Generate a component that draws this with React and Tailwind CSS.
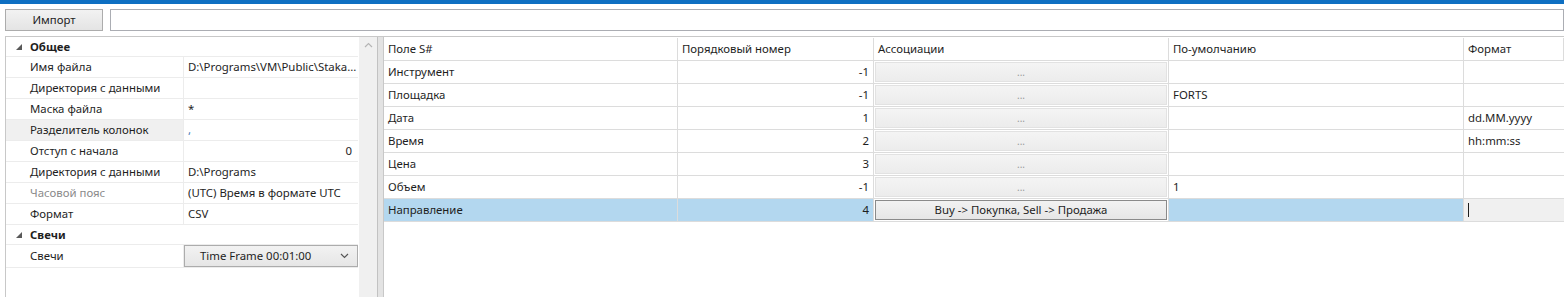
import React from 'react';

const props = [
  { type: 'cat', label: 'Общее' },
  { name: 'Имя файла', value: 'D:\\Programs\\VM\\Public\\Staka...' },
  { name: 'Директория с данными', value: '' },
  { name: 'Маска файла', value: '*' },
  { name: 'Разделитель колонок', value: ',', selected: true },
  { name: 'Отступ с начала', value: '0', right: true },
  { name: 'Директория с данными', value: 'D:\\Programs' },
  { name: 'Часовой пояс', value: '(UTC) Время в формате UTC', disabled: true },
  { name: 'Формат', value: 'CSV' },
  { type: 'cat', label: 'Свечи' },
  { name: 'Свечи', combo: 'Time Frame 00:01:00' },
];

const columns = ['Поле S#', 'Порядковый номер', 'Ассоциации', 'По-умолчанию', 'Формат'];

const rows = [
  { field: 'Инструмент', order: '-1', assoc: '...', def: '', fmt: '' },
  { field: 'Площадка', order: '-1', assoc: '...', def: 'FORTS', fmt: '' },
  { field: 'Дата', order: '1', assoc: '...', def: '', fmt: 'dd.MM.yyyy' },
  { field: 'Время', order: '2', assoc: '...', def: '', fmt: 'hh:mm:ss' },
  { field: 'Цена', order: '3', assoc: '...', def: '', fmt: '' },
  { field: 'Объем', order: '-1', assoc: '...', def: '1', fmt: '' },
  { field: 'Направление', order: '4', assoc: 'Buy -> Покупка, Sell -> Продажа', def: '', fmt: '', selected: true },
];

const Triangle = () => (
  <svg width="6" height="6" viewBox="0 0 6 6" className="shrink-0">
    <path d="M6 0 L6 6 L0 6 Z" fill="#595959" />
  </svg>
);

const PropertyRow = ({ item }) => {
  if (item.type === 'cat') {
    return (
      <div className="h-[20px] flex items-center border-b border-[#ececec]">
        <div className="w-[24px] flex justify-center pl-[2px]">
          <Triangle />
        </div>
        <span className="font-bold">{item.label}</span>
      </div>
    );
  }
  return (
    <div className={`${item.combo ? 'h-[23px]' : 'h-[21px]'} flex border-b border-[#ececec]`}>
      <div
        className={`w-[178px] shrink-0 flex items-center pl-[24px] border-r border-[#ececec] ${
          item.selected ? 'bg-[#f0f0f0]' : ''
        } ${item.disabled ? 'text-[#8a8a8a]' : ''}`}
      >
        {item.name}
      </div>
      {item.combo ? (
        <div className="flex-1 flex items-center justify-between border border-[#acacac] bg-gradient-to-b from-[#f2f2f2] to-[#e6e6e6] pl-[15px] pr-[8px]">
          <span>{item.combo}</span>
          <svg width="9" height="6" viewBox="0 0 9 6">
            <path d="M1 1 L4.5 4.5 L8 1" fill="none" stroke="#555" strokeWidth="1.2" />
          </svg>
        </div>
      ) : (
        <div
          className={`flex-1 flex items-center px-[4px] whitespace-nowrap overflow-hidden ${
            item.right ? 'justify-end pr-[6px]' : ''
          } ${item.selected ? 'text-[#4a78b5]' : ''}`}
        >
          {item.value}
        </div>
      )}
    </div>
  );
};

const AssocCell = ({ text, selected }) => (
  <div className="border-r border-[#dcdcdc] p-[1px] flex">
    <div
      className={`flex-1 flex justify-center ${
        selected
          ? 'items-center border border-[#8a8a8a] bg-gradient-to-b from-[#f2f2f2] to-[#e6e6e6]'
          : 'items-end pb-[1px] border border-[#e2e2e2] bg-gradient-to-b from-[#f4f4f4] to-[#ececec] text-[#9a9a9a] text-[10px]'
      }`}
    >
      {text}
    </div>
  </div>
);

export default function App() {
  return (
    <div className="w-[1564px] h-[297px] bg-white overflow-hidden text-[11.4px] text-[#1e1e1e] font-['Noto_Sans',sans-serif] flex flex-col">
      {/* title accent */}
      <div className="h-[4px] bg-[#0e6fc2] shrink-0" />

      {/* toolbar */}
      <div className="flex items-center gap-[7px] pl-[5px] pt-[5px] h-[27px] shrink-0">
        <button className="w-[98px] h-[22px] border border-[#acacac] bg-gradient-to-b from-[#f2f2f2] to-[#e4e4e4] text-[11.4px] text-[#1e1e1e]">
          Импорт
        </button>
        <div className="flex-1 h-[22px] border border-[#abadb3] bg-white" />
      </div>

      {/* panels */}
      <div className="flex flex-1 mt-[5px] border-t border-[#c8c8c8] ml-[5px]">
        {/* property grid */}
        <div className="w-[353px] shrink-0 border-l border-[#c8c8c8] flex flex-col">
          {props.map((item, i) => (
            <PropertyRow key={i} item={item} />
          ))}
        </div>

        {/* scrollbar */}
        <div className="w-[18px] shrink-0 ml-[1px] bg-[#f0f0f0] flex justify-center pt-[5px]">
          <svg width="9" height="6" viewBox="0 0 9 6">
            <path d="M1 5 L4.5 1.5 L8 5" fill="none" stroke="#b5b5b5" strokeWidth="1.2" />
          </svg>
        </div>

        {/* splitter */}
        <div className="w-[6px] shrink-0 border-l border-[#c2c2c2] bg-[#e3e3e3]" />

        {/* data grid */}
        <div className="flex-1 border-l border-[#c8c8c8] overflow-hidden pt-[1px]">
          <div className="grid grid-cols-[294px_196px_295px_295px_1fr] h-[23px] border-b border-[#dcdcdc]">
            {columns.map((c) => (
              <div key={c} className="flex items-center px-[4px] border-r border-[#dcdcdc] whitespace-nowrap">
                {c}
              </div>
            ))}
          </div>
          {rows.map((r) => (
            <div
              key={r.field}
              className="grid grid-cols-[294px_196px_295px_295px_1fr] h-[23px] border-b border-[#dcdcdc]"
            >
              <div className={`flex items-center px-[4px] border-r border-[#dcdcdc] ${r.selected ? 'bg-[#b3d7ef]' : ''}`}>
                {r.field}
              </div>
              <div
                className={`flex items-center justify-end px-[4px] border-r border-[#dcdcdc] ${
                  r.selected ? 'bg-[#b3d7ef]' : ''
                }`}
              >
                {r.order}
              </div>
              <AssocCell text={r.assoc} selected={r.selected} />
              <div className={`flex items-center px-[4px] border-r border-[#dcdcdc] ${r.selected ? 'bg-[#b3d7ef]' : ''}`}>
                {r.def}
              </div>
              <div className={`flex items-center px-[4px] ${r.selected ? 'bg-[#f0f0f0]' : ''}`}>
                {r.selected ? <div className="w-[1px] h-[14px] bg-[#1e1e1e]" /> : r.fmt}
              </div>
            </div>
          ))}
        </div>
      </div>
    </div>
  );
}
